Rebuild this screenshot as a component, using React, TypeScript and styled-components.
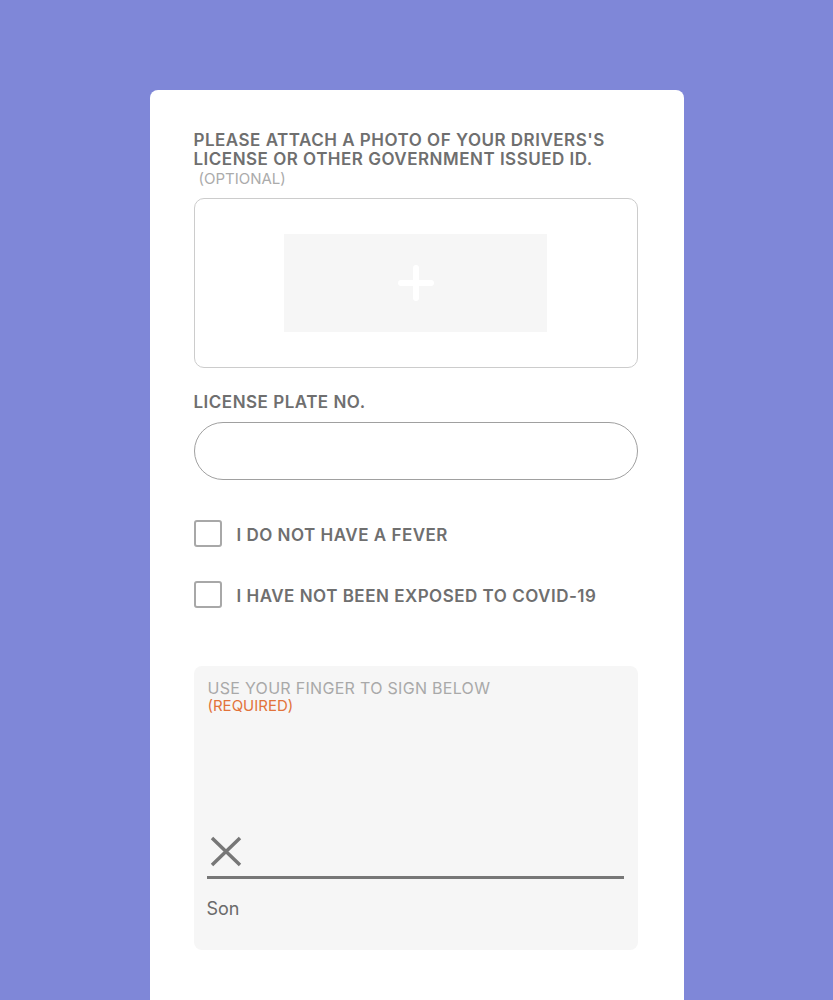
import React from "react";
import styled, { createGlobalStyle } from "styled-components";

const GlobalStyle = createGlobalStyle`
  html, body {
    margin: 0;
    padding: 0;
    background: #7f87d8;
  }
  body {
    font-family: Inter, "Liberation Sans", sans-serif;
  }
`;

const Page = styled.div`
  height: 1000px;
  overflow: hidden;
  display: flex;
  justify-content: center;
  padding-top: 90px;
  box-sizing: border-box;
`;

const Card = styled.div`
  width: 534px;
  height: 960px;
  flex-shrink: 0;
  background: #ffffff;
  border-radius: 8px;
  padding: 41px 46px 0 44px;
  box-sizing: border-box;
  display: flex;
  flex-direction: column;
`;

const Label = styled.div`
  font-size: 17px;
  font-weight: 600;
  line-height: 19px;
  letter-spacing: 0.5px;
  color: #6f6f6f;
`;

const Optional = styled.div`
  font-size: 15px;
  line-height: 20px;
  color: #ababab;
  padding-left: 5px;
`;

const Upload = styled.div`
  margin-top: 9px;
  height: 170px;
  border: 1px solid #cccccc;
  border-radius: 10px;
  box-sizing: border-box;
  display: flex;
  align-items: center;
  justify-content: center;
`;

const UploadInner = styled.div`
  width: 263px;
  height: 98px;
  background: #f6f6f6;
  display: flex;
  align-items: center;
  justify-content: center;
`;

const FieldLabel = styled(Label)`
  margin-top: 25px;
`;

const Input = styled.input`
  margin-top: 10px;
  height: 58px;
  border: 1px solid #a0a0a0;
  border-radius: 29px;
  box-sizing: border-box;
  padding: 0 24px;
  font: inherit;
  font-size: 16px;
  outline: none;
  background: #fff;
`;

const Checks = styled.div`
  margin-top: 40px;
  display: flex;
  flex-direction: column;
  gap: 34px;
`;

const CheckRow = styled.label`
  display: flex;
  align-items: center;
  gap: 15px;
`;

const CheckText = styled(Label)`
  padding-top: 3px;
`;

const Box = styled.span`
  width: 28px;
  height: 27px;
  border: 2px solid #a8a8a8;
  border-radius: 3px;
  box-sizing: border-box;
  flex-shrink: 0;
`;

const SignPad = styled.div`
  margin-top: 58px;
  height: 284px;
  background: #f6f6f6;
  border-radius: 8px;
  padding: 14px 14px 0 13px;
  box-sizing: border-box;
  display: flex;
  flex-direction: column;
`;

const SignHint = styled.div`
  font-size: 16px;
  line-height: 17px;
  letter-spacing: 0.3px;
  color: #a9a9a9;
  padding-left: 1px;
`;

const Required = styled.div`
  font-size: 15px;
  line-height: 17px;
  color: #e2733a;
  padding-left: 1px;
`;

const SignArea = styled.div`
  flex: 1;
  display: flex;
  align-items: flex-end;
  padding-left: 3px;
  padding-bottom: 9px;
`;

const SignLine = styled.div`
  height: 3px;
  background: #777777;
`;

const Signer = styled.div`
  margin-top: 19px;
  font-size: 18px;
  color: #6a6a6a;
  height: 52px;
`;

export default function App() {
  return (
    <>
      <GlobalStyle />
      <Page>
        <Card>
          <Label>
            PLEASE ATTACH A PHOTO OF YOUR DRIVERS'S
            <br />
            LICENSE OR OTHER GOVERNMENT ISSUED ID.
          </Label>
          <Optional>(OPTIONAL)</Optional>
          <Upload>
            <UploadInner>
              <svg width="38" height="38" viewBox="0 0 38 38">
                <path
                  d="M19 4v30M4 19h30"
                  stroke="#ffffff"
                  strokeWidth="6"
                  strokeLinecap="round"
                  fill="none"
                />
              </svg>
            </UploadInner>
          </Upload>
          <FieldLabel>LICENSE PLATE NO.</FieldLabel>
          <Input type="text" />
          <Checks>
            <CheckRow>
              <Box />
              <CheckText>I DO NOT HAVE A FEVER</CheckText>
            </CheckRow>
            <CheckRow>
              <Box />
              <CheckText>I HAVE NOT BEEN EXPOSED TO COVID-19</CheckText>
            </CheckRow>
          </Checks>
          <SignPad>
            <SignHint>USE YOUR FINGER TO SIGN BELOW</SignHint>
            <Required>(REQUIRED)</Required>
            <SignArea>
              <svg width="32" height="31" viewBox="0 0 32 31">
                <path
                  d="M2 2l28 27M30 2L2 29"
                  stroke="#777777"
                  strokeWidth="3.5"
                  fill="none"
                />
              </svg>
            </SignArea>
            <SignLine />
            <Signer>Son</Signer>
          </SignPad>
        </Card>
      </Page>
    </>
  );
}
